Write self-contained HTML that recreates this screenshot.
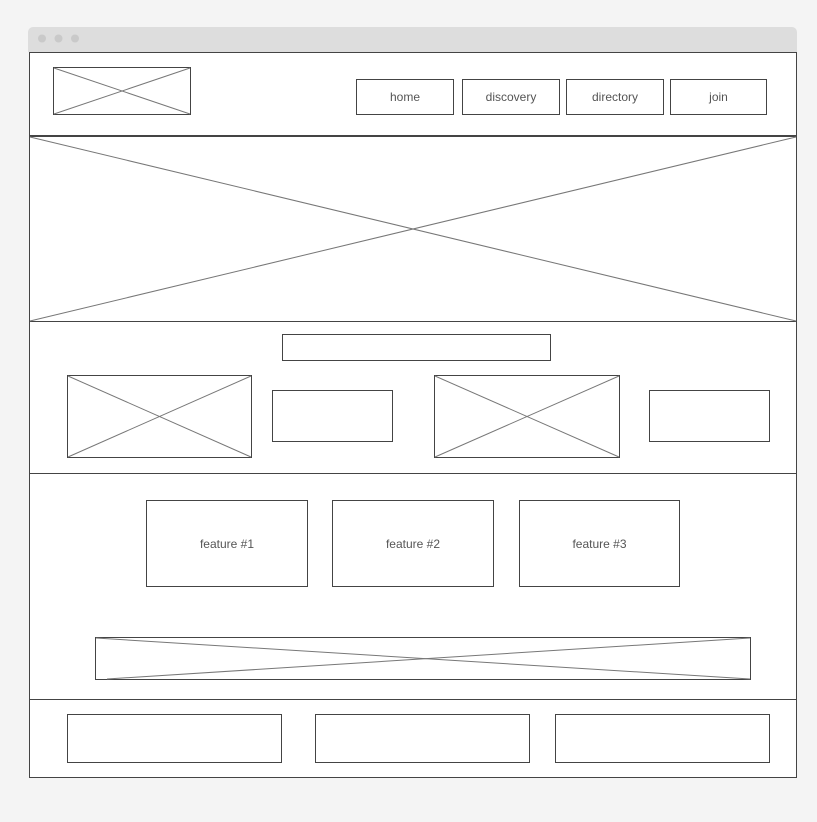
<!DOCTYPE html>
<html><head><meta charset="utf-8"><style>
html,body{margin:0;padding:0;background:#f4f4f4;width:817px;height:822px;overflow:hidden}
svg{display:block}
text{font-family:"Liberation Sans",sans-serif;font-size:12px;fill:#555}
</style></head><body>
<svg width="817" height="822" viewBox="0 0 817 822" xmlns="http://www.w3.org/2000/svg">
<rect x="0" y="0" width="817" height="822" fill="#f4f4f4"/>
<path d="M28 52 V32 a5 5 0 0 1 5 -5 H792 a5 5 0 0 1 5 5 V52 Z" fill="#dddddd"/>
<circle cx="42" cy="38.5" r="4" fill="#c9c9c9"/>
<circle cx="58.5" cy="38.5" r="4" fill="#c9c9c9"/>
<circle cx="75" cy="38.5" r="4" fill="#c9c9c9"/>
<rect x="29.5" y="52.5" width="767" height="725" fill="#fff" stroke="#444" stroke-width="1"/>
<g stroke="#444" fill="none" stroke-width="1">
<line x1="29" y1="136" x2="797" y2="136" stroke-width="2"/>
<line x1="29" y1="321.5" x2="797" y2="321.5"/>
<line x1="29" y1="473.5" x2="797" y2="473.5"/>
<line x1="29" y1="699.5" x2="797" y2="699.5"/>
<rect x="53.5" y="67.5" width="137" height="47"/>
<rect x="356.5" y="79.5" width="97" height="35"/>
<rect x="462.5" y="79.5" width="97" height="35"/>
<rect x="566.5" y="79.5" width="97" height="35"/>
<rect x="670.5" y="79.5" width="96" height="35"/>
<rect x="282.5" y="334.5" width="268" height="26"/>
<rect x="67.5" y="375.5" width="184" height="82"/>
<rect x="272.5" y="390.5" width="120" height="51"/>
<rect x="434.5" y="375.5" width="185" height="82"/>
<rect x="649.5" y="390.5" width="120" height="51"/>
<rect x="146.5" y="500.5" width="161" height="86"/>
<rect x="332.5" y="500.5" width="161" height="86"/>
<rect x="519.5" y="500.5" width="160" height="86"/>
<rect x="95.5" y="637.5" width="655" height="42"/>
<rect x="67.5" y="714.5" width="214" height="48"/>
<rect x="315.5" y="714.5" width="214" height="48"/>
<rect x="555.5" y="714.5" width="214" height="48"/>
</g>
<g stroke="#777" stroke-width="1" fill="none">
<line x1="54" y1="68" x2="190" y2="114"/><line x1="190" y1="68" x2="54" y2="114"/>
<line x1="30" y1="137" x2="796" y2="321"/><line x1="796" y1="137" x2="30" y2="321"/>
<line x1="68" y1="376" x2="251" y2="457"/><line x1="251" y1="376" x2="68" y2="457"/>
<line x1="435" y1="376" x2="619" y2="457"/><line x1="619" y1="376" x2="435" y2="457"/>
<line x1="96" y1="638" x2="750" y2="679"/><line x1="750" y1="638" x2="107" y2="679"/>
</g>
<text x="405" y="101" text-anchor="middle">home</text>
<text x="511" y="101" text-anchor="middle">discovery</text>
<text x="615" y="101" text-anchor="middle">directory</text>
<text x="718.5" y="101" text-anchor="middle">join</text>
<text x="227" y="548" text-anchor="middle">feature #1</text>
<text x="413" y="548" text-anchor="middle">feature #2</text>
<text x="599.5" y="548" text-anchor="middle">feature #3</text>
</svg>
</body></html>
